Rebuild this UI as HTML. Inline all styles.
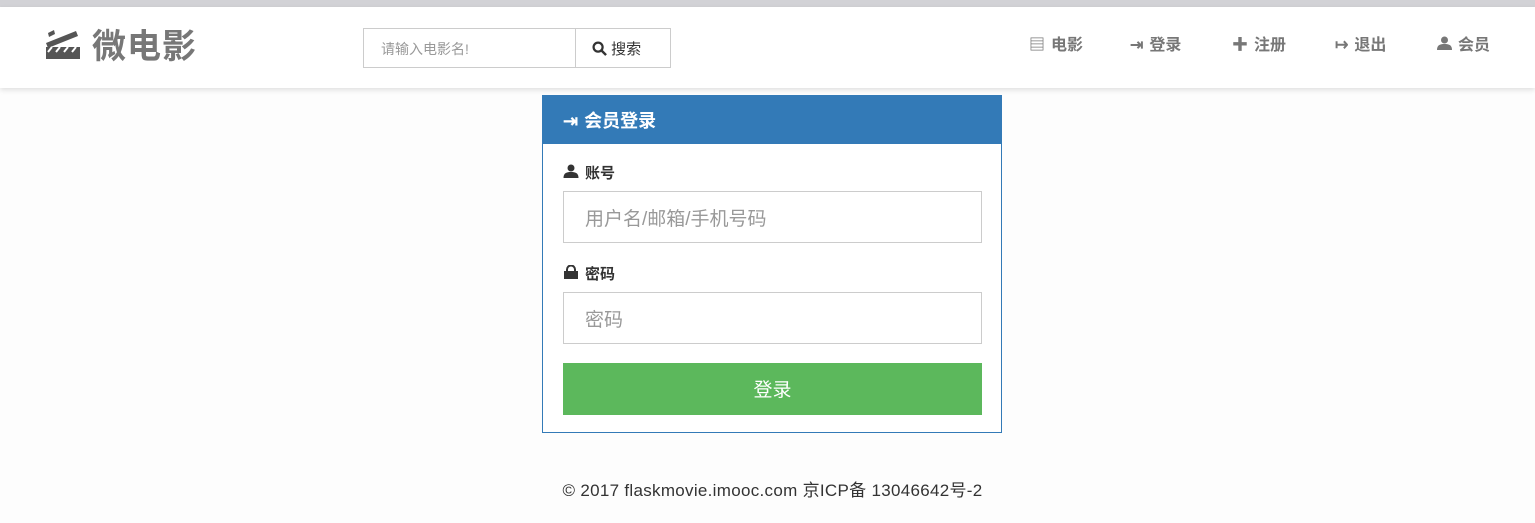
<!DOCTYPE html>
<html><head><meta charset="utf-8"><style>
*{box-sizing:border-box;margin:0;padding:0}
body{width:1535px;height:523px;background:#fdfdfd;font-family:"Liberation Sans","Noto Sans CJK SC",sans-serif;position:relative;overflow:hidden;color:#333}
.top{position:absolute;left:0;top:0;width:1535px;height:7px;background:#d2d2d6}
.nav{position:absolute;left:0;top:7px;width:1535px;height:81px;background:#fff;box-shadow:0 2px 5px rgba(0,0,0,.12)}
.abs{position:absolute}
.brand{left:92px;top:12px;font-size:34px;color:#777;font-weight:bold;letter-spacing:1px}
.search{left:363px;top:21px;width:308px;height:40px;border:1px solid #ccc}
.search .in{position:absolute;left:17px;top:10px;font-size:14px;color:#999}
.search .btn{position:absolute;left:211px;top:0;width:96px;height:38px;border-left:1px solid #ccc;font-size:15px;color:#333;padding:9px 0 0 16px}
.ni{top:24px;font-size:16px;color:#777;font-weight:bold}
.ni span{margin-left:6px}
.panel{left:542px;top:95px;width:460px;height:338px;border:1px solid #337ab7;background:#fff}
.ph{position:absolute;left:0;top:0;width:458px;height:48px;background:#337ab7;color:#fff;font-size:18px;font-weight:bold;padding:11px 0 0 20px}
.ph span{margin-left:6px}
.lbl{position:absolute;left:20px;font-size:15px;font-weight:bold;color:#333}
.lbl span{margin-left:6px}
.inp{position:absolute;left:20px;width:419px;height:52px;border:1px solid #ccc;font-size:19px;color:#999;padding:12px 0 0 21px}
.sub{position:absolute;left:20px;top:267px;width:419px;height:52px;background:#5cb85c;color:#fff;font-size:19px;text-align:center;padding-top:12px}
.foot{left:0;width:1535px;top:476px;text-align:center;font-size:17px;letter-spacing:.3px;color:#333;padding-left:10px}
</style></head><body>
<div class="top"></div>
<div class="nav">
<svg class="abs" style="left:44px;top:20px" width="36" height="32" viewBox="0 0 36 32"><g fill="#555"><path d="M2 20h34v12H2z"/><path d="M2 16l30-12 2 5-30 12z"/><path d="M4 6l6-3 1 4-6 3z"/></g><g stroke="#fff" stroke-width="2"><path d="M8 20l-4 5M16 20l-4 5M24 20l-4 5M32 20l-4 5"/></g></svg>
<div class="abs brand">微电影</div>
<div class="abs search"><div class="in">请输入电影名!</div><div class="btn"><svg width="15" height="15" viewBox="0 0 16 16" style="vertical-align:-2px"><circle cx="6.5" cy="6.5" r="4.8" fill="none" stroke="#333" stroke-width="2.4"/><path d="M10 10l5 5" stroke="#333" stroke-width="2.6"/></svg> 搜索</div></div>
<div class="abs ni" style="left:1029px">▤<span>电影</span></div>
<div class="abs ni" style="left:1130px">⇥<span>登录</span></div>
<div class="abs ni" style="left:1232px">✚<span>注册</span></div>
<div class="abs ni" style="left:1335px">↦<span>退出</span></div>
<div class="abs ni" style="left:1437px"><svg width="15" height="14" viewBox="0 0 15 14"><circle cx="7.5" cy="4" r="3.5" fill="#777"/><path d="M0 14c0-5 3-6 7.5-6S15 9 15 14z" fill="#777"/></svg><span>会员</span></div>
</div>
<div class="abs panel">
<div class="ph">⇥<span>会员登录</span></div>
<div class="lbl" style="top:66px"><svg width="16" height="14" viewBox="0 0 15 14"><circle cx="7.5" cy="4" r="3.5" fill="#333"/><path d="M0 14c0-5 3-6 7.5-6S15 9 15 14z" fill="#333"/></svg><span>账号</span></div>
<div class="inp" style="top:95px">用户名/邮箱/手机号码</div>
<div class="lbl" style="top:167px"><svg width="16" height="14" viewBox="0 0 16 14"><path d="M4 7V4.5a4 4 0 0 1 8 0V7" fill="none" stroke="#333" stroke-width="2"/><rect x="1" y="6" width="14" height="8" fill="#333"/></svg><span>密码</span></div>
<div class="inp" style="top:196px">密码</div>
<div class="sub">登录</div>
</div>
<div class="abs foot">© 2017 flaskmovie.imooc.com 京ICP备 13046642号-2</div>
</body></html>
